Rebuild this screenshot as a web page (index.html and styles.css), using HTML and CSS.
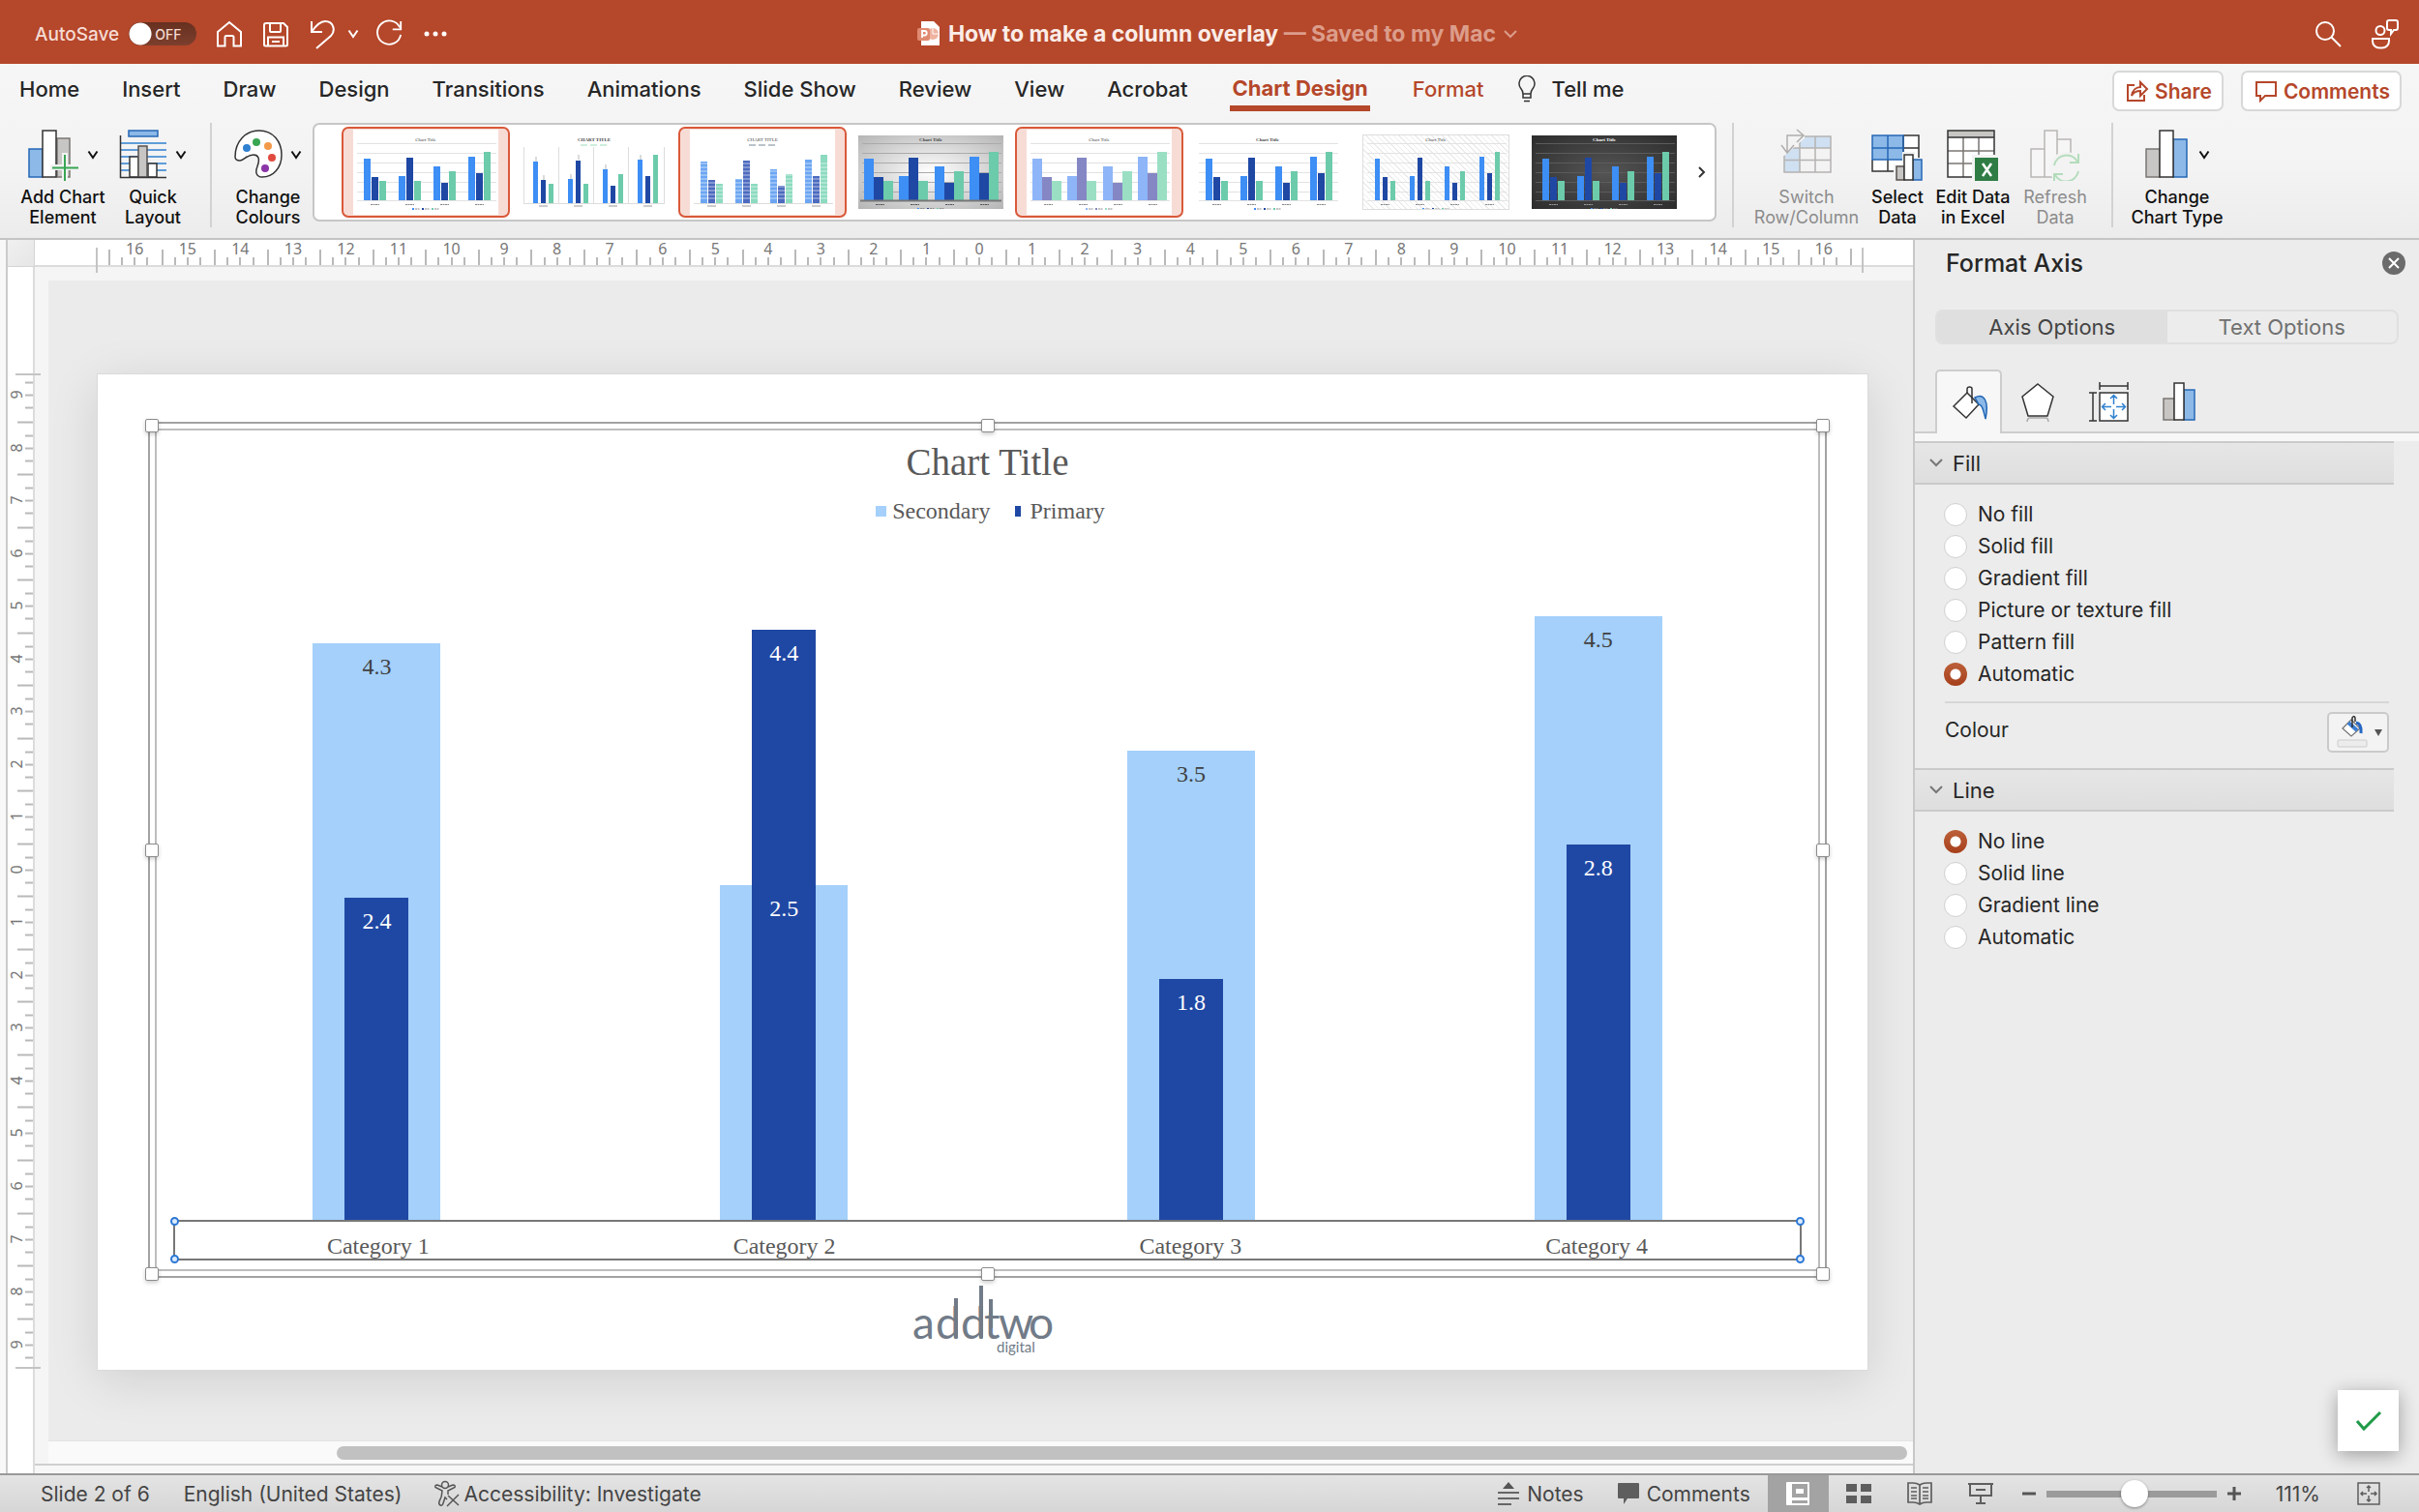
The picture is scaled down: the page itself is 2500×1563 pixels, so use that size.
FILE: index.html
```html
<!DOCTYPE html>
<html lang="en">
<head>
<meta charset="utf-8">
<title>How to make a column overlay</title>
<link rel="stylesheet" href="styles.css">
</head>
<body>
<svg class="defs" aria-hidden="true">
  <symbol id="bars" viewBox="0 0 150 88">
    <path fill="var(--a)" d="M11 73v-43h7v43zM47 73v-25h7v25zM83 73v-35h7v35zM119 73v-45h7v45z"/>
    <path fill="var(--b)" d="M19 73v-24h7v24zM55 73v-44h7v44zM91 73v-18h7v18zM127 73v-28h7v28z"/>
    <path fill="var(--c)" d="M27 73v-20h7v20zM63 73v-20h7v20zM99 73v-30h7v30zM135 73v-50h7v50z"/>
  </symbol>
  <symbol id="bars-full" viewBox="0 0 150 88">
    <path fill="var(--a)" d="M6 73v-43h10v43zM42 73v-25h10v25zM79 73v-35h10v35zM115 73v-45h10v45z"/>
    <path fill="var(--b)" d="M16 73v-24h10v24zM52 73v-44h10v44zM89 73v-18h10v18zM125 73v-28h10v28z"/>
    <path fill="var(--c)" d="M26 73v-20h10v20zM62 73v-20h10v20zM99 73v-30h10v30zM135 73v-50h10v50z"/>
  </symbol>
  <symbol id="bars-thin" viewBox="0 0 150 88">
    <path fill="var(--a)" d="M12 73v-43h5v43zM48 73v-25h5v25zM84 73v-35h5v35zM120 73v-45h5v45z"/>
    <path fill="var(--b)" d="M20 73v-24h5v24zM56 73v-44h5v44zM92 73v-18h5v18zM128 73v-28h5v28z"/>
    <path fill="var(--c)" d="M28 73v-20h5v20zM64 73v-20h5v20zM100 73v-30h5v30zM136 73v-50h5v50z"/>
  </symbol>
  <symbol id="grid" viewBox="0 0 150 88">
    <path fill="none" stroke="var(--g)" d="M4 14.500h144M4 24.500h144M4 34.500h144M4 44.500h144M4 54.500h144M4 64.500h144M4 73.500h144"/>
  </symbol>
  <symbol id="caps" viewBox="0 0 150 88">
    <path fill="none" stroke="var(--t)" stroke-dasharray="2 .5" d="M18 77.500h9M54 77.500h9M90 77.500h9M126 77.500h9"/>
    <path stroke="var(--a)" stroke-width="2" d="M61 82h2"/><path stroke="var(--b)" stroke-width="2" d="M71 82h2"/><path stroke="var(--c)" stroke-width="2" d="M81 82h2"/>
    <path stroke="var(--t)" stroke-dasharray="2 .5" d="M64 82h5M74 82h5M84 82h5"/>
  </symbol>
  <symbol id="chev" viewBox="0 0 12 12"><path d="M1.500 2.500L6 9l4.500-6.500" fill="none" stroke="currentColor" stroke-width="2"/></symbol>
</svg>

<header class="titlebar">
  <div class="quick">
    <label class="autosave">AutoSave <input type="checkbox" class="switch"><span class="off">OFF</span></label>
    <button class="tb" aria-label="Home"><svg width="28" height="30" viewBox="0 0 28 30"><path d="M2 13L14 3l12 10v14.500h-7.500v-9q0-1.500-1.500-1.500h-6q-1.500 0-1.500 1.500v9H2z"/></svg></button>
    <button class="tb" aria-label="Save"><svg width="28" height="30" viewBox="0 0 28 30"><path d="M4 4h18l4 4v18q0 1.500-1.500 1.500h-21Q2 27.500 2 26V6q0-2 2-2zM8 4v8q0 1 1 1h9q1 0 1-1V4M6 27V18.500h16V27M10 23h8"/></svg></button>
    <button class="tb undo" aria-label="Undo"><svg width="28" height="32" viewBox="0 0 28 32"><path d="M3 3v11h11M3 14C9 5 13 3 17 3c9 0 11 10 6 15L8 31"/></svg><svg width="12" height="12"><use href="#chev"/></svg></button>
    <button class="tb" aria-label="Redo"><svg width="30" height="30" viewBox="0 0 32 32"><path d="M28 9A13 13 0 1 0 29 17M29 2v9h-9"/></svg></button>
    <button class="tb" aria-label="More"><svg width="26" height="8" viewBox="0 0 26 8"><g class="solid"><circle cx="4" cy="4" r="2.500"/><circle cx="13" cy="4" r="2.500"/><circle cx="22" cy="4" r="2.500"/></g></svg></button>
  </div>
  <div class="doc">
    <svg width="24" height="28" viewBox="0 0 24 28"><path d="M4 1h13l6 6v19H4z" fill="#fff"/><circle cx="16" cy="14" r="6" fill="#efb3a0"/><path d="M16 8v6h6" stroke="#fff" fill="none"/><rect y="8" width="13" height="13" rx="2" fill="#e08a72"/><path d="M5 18v-7h2.500a2 2 0 0 1 0 4.500H5" stroke="#fff" stroke-width="1.800" fill="none"/></svg>
    <h1>How to make a column overlay <span>— Saved to my Mac</span></h1>
    <svg class="pale" width="14" height="14"><path d="M1 4l6 6 6-6" fill="none" stroke="currentColor" stroke-width="2"/></svg>
  </div>
  <div class="right">
    <button class="tb" aria-label="Search"><svg width="28" height="30" viewBox="0 0 28 30"><circle cx="11" cy="12" r="9"/><path d="M17.500 18.500L27 28"/></svg></button>
    <button class="tb" aria-label="Account"><svg width="30" height="32" viewBox="0 0 30 32"><circle cx="10" cy="12.500" r="4.500"/><path d="M2 21h17v2.500a7 7 0 0 1-7 7H9a7 7 0 0 1-7-7zM17 4q0-2 2-2h7q2 0 2 2v6q0 2-2 2h-2l-3 4v-4h-2q-2 0-2-2z"/></svg></button>
  </div>
</header>

<section class="ribbon">
  <nav class="tabs">
    <a href="#">Home</a><a href="#">Insert</a><a href="#">Draw</a><a href="#">Design</a><a href="#">Transitions</a><a href="#">Animations</a><a href="#">Slide Show</a><a href="#">Review</a><a href="#">View</a><a href="#">Acrobat</a><a href="#" class="current">Chart Design</a><a href="#" class="accent">Format</a>
    <a href="#" class="tell"><svg width="20" height="28" viewBox="0 0 20 28"><path d="M6 19q0-3-2.500-6a8 8 0 1 1 13 0Q14 16 14 19zM6 19v4h8v-4M7 26.500h6" fill="none" stroke="#333" stroke-width="1.500"/></svg>Tell me</a>
    <div class="actions">
      <button class="act"><svg width="24" height="24" viewBox="0 0 24 24"><path d="M9 6H2v16h17v-6M6 17c1-6 5-9 9-9V3l7 7-7 7v-5c-4 0-7 1-9 5z"/></svg>Share</button>
      <button class="act"><svg width="24" height="24" viewBox="0 0 24 24"><path d="M2 3h20v14H11l-5 5v-5H2z"/></svg>Comments</button>
    </div>
  </nav>

  <div class="tools">
    <button class="tool w100"><span class="ico"><svg width="54" height="54" viewBox="0 0 54 54"><path d="M2 21h14v29H2z" fill="#8db9e8" stroke="#2467b5" stroke-width="1.500"/><path d="M31 10h13v40H31z" fill="#c8c6c4" stroke="#797673" stroke-width="1.500"/><path d="M16 2h14v48H16z" fill="#fff" stroke="#333" stroke-width="1.500"/><path d="M39 25v29M24 40h29" stroke="#f3f3f3" stroke-width="6"/><path d="M39 27v27M26 40.500h27" stroke="#38a654" stroke-width="2"/></svg><svg width="12" height="12"><use href="#chev"/></svg></span>Add Chart<br>Element</button>
    <button class="tool w86"><span class="ico"><svg width="50" height="54" viewBox="0 0 50 54"><path d="M10 2h30v6H10z" fill="#8db9e8" stroke="#2467b5" stroke-width="1.500"/><path d="M2 15h47M2 22h47M2 29h47M2 36h47M2 43h47" stroke="#2f80d0" stroke-width="1.500"/><path d="M11 29h9v21h-9zM30 36h9v14h-9z" fill="#fff" stroke="#333" stroke-width="1.500"/><path d="M20 18h9v32h-9z" fill="#c8c6c4" stroke="#55524f" stroke-width="1.500"/><path d="M1.500 7v43.500H49" fill="none" stroke="#333" stroke-width="1.500"/></svg><svg width="12" height="12"><use href="#chev"/></svg></span>Quick<br>Layout</button>
    <i class="sep"></i>
    <button class="tool w84"><span class="ico"><svg width="50" height="54" viewBox="0 0 50 54"><path d="M1 29C1 13 12 2 26 2s23 11 23 25-9 23-20 23c-7 0-7-6-5-11 3-8 1-12-4-12-7 0-9 5-14 6-4 0-5-2-5-4z" fill="#fff" stroke="#333" stroke-width="1.500"/><circle cx="13" cy="20" r="4" fill="#2f80d0"/><circle cx="23" cy="14" r="4" fill="#38a654"/><circle cx="35" cy="18" r="4" fill="#f2994a"/><circle cx="39" cy="30" r="4" fill="#e04a3f"/><circle cx="32" cy="41" r="4" fill="#8a35a8"/></svg><svg width="12" height="12"><use href="#chev"/></svg></span>Change<br>Colours</button>

    <div class="gallery">
      <button class="style sel" aria-label="Style 1"><svg class="thumb white" viewBox="0 0 150 88"><use href="#grid"/><use href="#bars"/><use href="#caps"/><text x="75" y="12">Chart Title</text></svg></button>
      <button class="style" aria-label="Style 2"><svg class="thumb white" viewBox="0 0 150 88"><path d="M2.500 18v58M38.500 18v58M74.500 18v58M110.500 18v58M147.500 18v58M2 76.500h146" stroke="#ddd"/><use href="#bars-thin" y="3"/><path d="M15 28v5M51 46v5M87 36v5M123 26v5M59 26v5M23 47v5" stroke="#888" stroke-width=".6"/><text x="75" y="12" class="b">CHART TITLE</text><path d="M61 16h28" stroke="#9db" stroke-dasharray="7 3"/><path d="M18 79h9M54 79h9M90 79h9M126 79h9" stroke="#999"/></svg></button>
      <button class="style sel" aria-label="Style 3"><svg class="thumb white soft" viewBox="0 0 150 88"><use href="#bars" y="3"/><path d="M4 76.500h144" stroke="#ddd"/><path d="M8 35h136M8 39h136M8 43h136M8 47h136M8 51h136M8 55h136M8 59h136M8 63h136M8 67h136M8 71h136" stroke="#fff" stroke-width=".6"/><text x="75" y="12">CHART TITLE</text><path d="M61 16h28" stroke="#789" stroke-dasharray="7 3"/><path d="M18 79h9M54 79h9M90 79h9M126 79h9" stroke="#999"/></svg></button>
      <button class="style" aria-label="Style 4"><svg class="thumb silver" viewBox="0 6 150 76"><use href="#grid" width="150" height="88"/><use href="#bars-full" width="150" height="88"/><path d="M2 73.500h146" stroke="#777" stroke-width="2"/><use href="#caps" width="150" height="88"/><text x="75" y="12" class="b">Chart Title</text></svg></button>
      <button class="style sel" aria-label="Style 5"><svg class="thumb white fade" viewBox="0 0 150 88"><use href="#grid"/><use href="#bars-full"/><use href="#caps"/><text x="75" y="12">Chart Title</text></svg></button>
      <button class="style" aria-label="Style 6"><svg class="thumb white" viewBox="0 0 150 88"><use href="#grid"/><use href="#bars"/><use href="#caps"/><text x="75" y="12" class="b">Chart Title</text></svg></button>
      <button class="style" aria-label="Style 7"><svg class="thumb hatch" viewBox="0 6 150 76"><use href="#grid" width="150" height="88"/><use href="#bars-thin" width="150" height="88"/><use href="#caps" width="150" height="88"/><text x="75" y="12">Chart Title</text></svg></button>
      <button class="style" aria-label="Style 8"><svg class="thumb dark" viewBox="0 6 150 76"><use href="#grid" width="150" height="88"/><use href="#bars" width="150" height="88"/><use href="#caps" width="150" height="88"/><text x="75" y="12" class="b">Chart Title</text></svg></button>
      <button class="more" aria-label="More styles"><svg width="10" height="14"><path d="M2 2l5 5-5 5" fill="none" stroke="#333" stroke-width="2"/></svg></button>
    </div>

    <i class="sep"></i>
    <button class="tool w118" disabled><span class="ico"><svg width="54" height="54" viewBox="0 0 54 54"><path d="M20 8h32v12H20v25H4V20h16z" fill="#cfe0f2"/><path d="M4 20h48v25H4zM20 8h32v37H20zM36 8v37M4 32.500h48" fill="none" stroke="#b5b3b1" stroke-width="1.500"/><path d="M1 0h24v10L4 28H0z" fill="#f3f3f3"/><path d="M7 24V7h16M17 1l7 6-7 7M1 17l6 8 7-8" fill="none" stroke="#b0aeac" stroke-width="1.500"/></svg></span>Switch<br>Row/Column</button>
    <button class="tool w70"><span class="ico"><svg width="54" height="54" viewBox="0 0 54 54"><path d="M1 7h48v37H1z" fill="#fff"/><path d="M1 7h32v25H1z" fill="#8db9e8"/><path d="M33 7h16v37H1V32M33 7v37M17 32v12M33 20h16" fill="none" stroke="#333" stroke-width="1.500"/><path d="M1 7h32v25H1zM17 7v25M1 20h32" fill="none" stroke="#2467b5" stroke-width="1.500"/><path d="M23 37h9V24h13v6h9v24H23z" fill="#f3f3f3"/><path d="M26 39h8v14h-8z" fill="#c8c6c4" stroke="#55524f" stroke-width="1.500"/><path d="M43 32h9v21h-9z" fill="#8db9e8" stroke="#2467b5" stroke-width="1.500"/><path d="M34 27h9v26h-9z" fill="#fff" stroke="#333" stroke-width="1.500"/></svg></span>Select<br>Data</button>
    <button class="tool w86"><span class="ico"><svg width="54" height="54" viewBox="0 0 54 54"><path d="M1 2h48v48H1z" fill="#fff"/><path d="M1 2h48v7H1z" fill="#c8c6c4"/><path d="M17 9v41M33 9v41M1 23h48M1 36h48" stroke="#797673" stroke-width="1.500"/><path d="M1 2h48v48H1zM1 9h48" fill="none" stroke="#333" stroke-width="1.500"/><path d="M26 27h28v27H26z" fill="#f3f3f3"/><path d="M29 30h24v24H29z" fill="#2f7d44"/><path d="M37 36l9 13M46 36l-9 13" stroke="#fff" stroke-width="2.500"/></svg></span>Edit Data<br>in Excel</button>
    <button class="tool w84" disabled><span class="ico"><svg width="54" height="54" viewBox="0 0 54 54"><path d="M2 21h14v29H2zM29 11h14v39H29zM16 2h13v48H16z" fill="#f6f6f6" stroke="#b8b6b4" stroke-width="1.500"/><circle cx="38" cy="41" r="17" fill="#f3f3f3"/><path d="M26 38a13 13 0 0 1 24-4M51 26v9h-9M51 44a13 13 0 0 1-24 4M26 55v-8h9" fill="none" stroke="#b4dcbc" stroke-width="2"/></svg></span>Refresh<br>Data</button>
    <i class="sep"></i>
    <button class="tool w100"><span class="ico"><svg width="48" height="54" viewBox="0 0 48 54"><path d="M2 21h14v29H2z" fill="#c8c6c4" stroke="#797673" stroke-width="1.500"/><path d="M30 11h14v39H30z" fill="#8db9e8" stroke="#2467b5" stroke-width="1.500"/><path d="M16 2h14v48H16z" fill="#fff" stroke="#333" stroke-width="1.500"/></svg><svg width="12" height="12"><use href="#chev"/></svg></span>Change<br>Chart Type</button>
  </div>
</section>

<main class="body">
  <section class="editor">
    <div class="strip"></div>
    <div class="corner"></div>
    <div class="hruler"><i>16</i><i>15</i><i>14</i><i>13</i><i>12</i><i>11</i><i>10</i><i>9</i><i>8</i><i>7</i><i>6</i><i>5</i><i>4</i><i>3</i><i>2</i><i>1</i><i>0</i><i>1</i><i>2</i><i>3</i><i>4</i><i>5</i><i>6</i><i>7</i><i>8</i><i>9</i><i>10</i><i>11</i><i>12</i><i>13</i><i>14</i><i>15</i><i>16</i></div>
    <div class="vruler"><i>9</i><i>8</i><i>7</i><i>6</i><i>5</i><i>4</i><i>3</i><i>2</i><i>1</i><i>0</i><i>1</i><i>2</i><i>3</i><i>4</i><i>5</i><i>6</i><i>7</i><i>8</i><i>9</i></div>
    <div class="work">
      <div class="stage">
        <article class="slide">
          <div class="frame">
            <div class="chart">
              <h2>Chart Title</h2>
              <div class="legend"><span class="key light-key">Secondary</span><span class="key dark-key">Primary</span></div>
              <div class="plot">
                <div class="cat"><b class="bar wide" style="--v:4.3"></b><b class="bar slim" style="--v:2.4"></b><span class="val" style="--v:4.3">4.3</span><span class="val inv" style="--v:2.4">2.4</span></div>
                <div class="cat"><b class="bar wide" style="--v:2.5"></b><b class="bar slim" style="--v:4.4"></b><span class="val inv" style="--v:2.5">2.5</span><span class="val inv" style="--v:4.4">4.4</span></div>
                <div class="cat"><b class="bar wide" style="--v:3.5"></b><b class="bar slim" style="--v:1.8"></b><span class="val" style="--v:3.5">3.5</span><span class="val inv" style="--v:1.8">1.8</span></div>
                <div class="cat"><b class="bar wide" style="--v:4.5"></b><b class="bar slim" style="--v:2.8"></b><span class="val" style="--v:4.5">4.5</span><span class="val inv" style="--v:2.8">2.8</span></div>
              </div>
              <div class="axis"><span>Category 1</span><span>Category 2</span><span>Category 3</span><span>Category 4</span>
                <i class="dot t l"></i><i class="dot t r"></i><i class="dot b l"></i><i class="dot b r"></i></div>
            </div>
            <i class="grip t l"></i><i class="grip t c"></i><i class="grip t r"></i><i class="grip m l"></i><i class="grip m r"></i><i class="grip b l"></i><i class="grip b c"></i><i class="grip b r"></i>
          </div>
          <svg class="logo" width="152" height="74" viewBox="0 0 152 74"><text x="3 27 53 77 92 123" y="56" font-size="46">addtwo</text><path d="M46 14h4v41h-4zM72 1h4v54h-4zM82 15h4v30h-4z"/><text x="90" y="70" font-size="15">digital</text></svg>
        </article>
      </div>
      <div class="scroll"><i></i></div>
    </div>
  </section>

  <aside class="pane">
    <div class="phead"><h2>Format Axis</h2><button class="close" aria-label="Close"><svg width="24" height="24"><circle cx="12" cy="12" r="12" fill="#6b6b6b"/><path d="M7 7l10 10M17 7L7 17" stroke="#fff" stroke-width="2"/></svg></button></div>
    <div class="seg"><button class="on">Axis Options</button><button>Text Options</button></div>
    <div class="ptabs">
      <button class="on" aria-label="Fill and line"><svg width="40" height="40" viewBox="0 0 40 40"><path d="M4 24L18 10l12 12-13 14z" fill="#fff" stroke="#333" stroke-width="1.500"/><path d="M18 11V6q0-2 2.500-2T23 6v15" fill="none" stroke="#333" stroke-width="1.500"/><path d="M26 15c9-5 15 3 11 22-2-8-3-13-5-14l-2-1z" fill="#8db9e8" stroke="#2467b5" stroke-width="1.500"/></svg></button>
      <button aria-label="Effects"><svg width="40" height="42" viewBox="0 0 40 42"><path d="M20 3l16 13-6 20H10L4 16z" fill="#fff" stroke="#333" stroke-width="1.500"/><path d="M11 38q-2 1-2 4M29 38q2 1 2 4M11 38h18" stroke="#aaa" fill="none" stroke-width="1.500"/></svg></button>
      <button aria-label="Size"><svg width="42" height="42" viewBox="0 0 42 42"><path d="M12 12h29v29H12z" fill="#fff" stroke="#333" stroke-width="1.500"/><path d="M12 1v8M41 1v8M12 5h29M1 12h8M1 41h8M5 12v29" stroke="#333" stroke-width="1.500"/><path d="M26.500 24v-9M26.500 29v9M24 26.500h-9M29 26.500h9M23 18l3.500-3.500L30 18M23 35l3.500 3.500L30 35M18 23l-3.500 3.500L18 30M35 23l3.500 3.500L35 30" fill="none" stroke="#2f80d0" stroke-width="1.500"/></svg></button>
      <button aria-label="Axis options"><svg width="34" height="40" viewBox="0 0 34 40"><path d="M1 17h11v22H1z" fill="#c8c6c4" stroke="#797673" stroke-width="1.500"/><path d="M22 8h11v31H22z" fill="#8db9e8" stroke="#2467b5" stroke-width="1.500"/><path d="M12 1h10v38H12z" fill="#fff" stroke="#333" stroke-width="1.500"/></svg></button>
    </div>
    <h3><svg width="14" height="10"><path d="M1 1l6 6 6-6" fill="none" stroke="#777" stroke-width="2"/></svg>Fill</h3>
    <div class="opts">
      <label><input type="radio" name="fill">No fill</label>
      <label><input type="radio" name="fill">Solid fill</label>
      <label><input type="radio" name="fill">Gradient fill</label>
      <label><input type="radio" name="fill">Picture or texture fill</label>
      <label><input type="radio" name="fill">Pattern fill</label>
      <label><input type="radio" name="fill" checked>Automatic</label>
    </div>
    <div class="colour"><span id="clabel">Colour</span><button aria-labelledby="clabel"><svg width="60" height="38" viewBox="0 0 60 38"><path d="M14 15l9-9 9 9-9 8z" fill="#fff" stroke="#777" stroke-width="1.300"/><path d="M20 9l9 8" stroke="#3b7fd4" stroke-width="4"/><path d="M24 14V4q2-3 3 0v4" fill="none" stroke="#333" stroke-width="1.500"/><path d="M28 9q6 1 5 11" fill="none" stroke="#2467c5" stroke-width="3"/><rect x="9" y="27" width="30" height="7" rx="1" fill="#ececec" stroke="#ccc"/><path d="M47 16h8l-4 7z" fill="#555"/></svg></button></div>
    <h3><svg width="14" height="10"><path d="M1 1l6 6 6-6" fill="none" stroke="#777" stroke-width="2"/></svg>Line</h3>
    <div class="opts">
      <label><input type="radio" name="line" checked>No line</label>
      <label><input type="radio" name="line">Solid line</label>
      <label><input type="radio" name="line">Gradient line</label>
      <label><input type="radio" name="line">Automatic</label>
    </div>
    <button class="ok" aria-label="Done"><svg width="28" height="22"><path d="M2 11l7 8L26 2" fill="none" stroke="#1f9a48" stroke-width="3"/></svg></button>
  </aside>
</main>

<footer class="status">
  <span class="s1">Slide 2 of 6</span><span class="s2">English (United States)</span>
  <button class="sb"><svg width="28" height="28" viewBox="0 0 28 28"><g fill="none" stroke="#555" stroke-width="1.500"><circle cx="12" cy="5" r="3.500"/><path d="M9 7L4 5Q1 5 2 7.500l7 3.500q0 6-3 11-1 3 1 4t3-2l2-6 2 2M15 7l5-2q3 0 2 2.500L15 11v4M15 16l11 10M26 15L14 27"/></g></svg>Accessibility: Investigate</button>
  <button class="sb push"><svg width="24" height="26" viewBox="0 0 24 26"><path d="M6 8l6-7 6 7z" fill="#555"/><path d="M1 12h22M1 18h22M1 24h14" stroke="#666" stroke-width="2"/></svg>Notes</button>
  <button class="sb com"><svg width="24" height="24" viewBox="0 0 24 24"><path d="M2 1h20q1 0 1 1v14q0 1-1 1H11l-4 6v-6H2q-1 0-1-1V2q0-1 1-1z" fill="#5e5e5e"/></svg>Comments</button>
  <button class="view on" aria-label="Normal view"><svg width="26" height="26" viewBox="0 0 26 26"><rect x="1" y="1" width="24" height="24" rx="1" fill="#fff"/><path d="M7 3h16v14H7zM7 20h16v3H7z" fill="#a3a3a3"/><path d="M11 8h8v5h-8z" fill="#fff"/></svg></button>
  <button class="view" aria-label="Slide sorter"><svg width="26" height="24" viewBox="0 0 26 24"><path d="M0 2h11v8H0zM15 2h11v8H15zM0 14h11v8H0zM15 14h11v8H15z" fill="#5e5e5e"/></svg></button>
  <button class="view" aria-label="Reading view"><svg width="28" height="26" viewBox="0 0 28 26"><path d="M14 4q-3-2-7-2H2v20h5q4 0 7 2 3-2 7-2h5V2h-5q-4 0-7 2zM14 4v20M5 7h6M5 11h6M5 15h6M5 18h6M17 7h6M17 11h6M17 15h6M17 18h6" fill="none" stroke="#5e5e5e" stroke-width="1.700"/></svg></button>
  <button class="view" aria-label="Slide show"><svg width="28" height="26" viewBox="0 0 28 26"><path d="M1 3h26M3 3v12h22V3M9 9h10M14 15v8M9 23h10" fill="none" stroke="#5e5e5e" stroke-width="2"/></svg></button>
  <button class="zb" aria-label="Zoom out"><svg width="16" height="16"><path d="M1 8h14" stroke="#555" stroke-width="3"/></svg></button>
  <input type="range" class="zoom" min="0" max="100" value="52" aria-label="Zoom">
  <button class="zb" aria-label="Zoom in"><svg width="16" height="16"><path d="M1 8h14M8 1v14" stroke="#555" stroke-width="3"/></svg></button>
  <span class="pct">111%</span>
  <button class="fit" aria-label="Fit slide"><svg width="24" height="24" viewBox="0 0 24 24"><path d="M1 1h22v22H1zM12 10V4M12 14v6M10 12H4M14 12h6M10 6l2-2 2 2M10 18l2 2 2-2M6 10l-2 2 2 2M18 10l2 2-2 2" fill="none" stroke="#5e5e5e" stroke-width="1.500"/></svg></button>
</footer>
</body>
</html>
```
FILE: styles.css
```css
* { box-sizing: border-box; }
body {
  margin: 0;
  min-height: 100vh;
  display: flex;
  flex-direction: column;
  font-family: Inter, "Liberation Sans", sans-serif;
  font-size: 21px;
  color: #262626;
  background: #ececec;
}
button { border: 0; padding: 0; background: none; font: inherit; color: inherit; }
a { color: inherit; text-decoration: none; }
h1, h2, h3 { margin: 0; font-weight: 500; }
svg { display: block; flex: none; }
.defs { position: absolute; width: 0; height: 0; }

/* Title bar */
.titlebar {
  display: grid;
  grid-template-columns: 1fr auto 1fr;
  align-items: center;
  height: 66px;
  padding: 4px 20px 0 36px;
  background: #b5472a;
  color: #fff;
}
.quick { display: flex; align-items: center; gap: 20px; }
.right { display: flex; align-items: center; justify-content: flex-end; gap: 30px; }
.tb svg { fill: none; stroke: #fff; stroke-width: 2; }
.tb .solid { fill: #fff; stroke: none; }
.undo { display: flex; align-items: center; gap: 12px; }
.undo + .tb { margin-left: -4px; }
.autosave { display: grid; grid-template-columns: auto 70px; align-items: center; column-gap: 10px; font-size: 19px; font-weight: 500; color: #f6dcd4; }
.switch {
  grid-area: 1 / 2;
  appearance: none;
  margin: 0;
  width: 70px;
  height: 24px;
  border-radius: 12px;
  background: radial-gradient(circle at 12px 12px, #fff 11px, #0000 12px), linear-gradient(#66301f, #7d3f2e);
}
.off { grid-area: 1 / 2; padding-left: 27px; font-size: 14px; }
.doc { display: flex; align-items: center; gap: 8px; }
.doc h1 { font-size: 23px; font-weight: 700; color: #fbece7; white-space: nowrap; }
.doc h1 span, .pale { color: #dc9d8b; }

/* Ribbon */
.ribbon { background: linear-gradient(#f6f6f6, #f3f3f3 60%, #ececec); border-bottom: 2px solid #c4c4c4; }
.tabs { display: flex; align-items: center; gap: 44px; height: 51px; padding: 0 18px 0 20px; font-size: 22px; font-weight: 500; }
.tabs a { white-space: nowrap; }
.tabs .accent, .current { color: #b5472a; }
.tabs .current { padding: 0 2px; font-weight: 700; align-self: stretch; line-height: 50px; box-shadow: inset 0 -2px #f4f4f4, inset 0 -8px #b5472a; }
.tell { display: flex; align-items: center; gap: 16px; margin-left: -10px; }
.actions { display: flex; gap: 18px; margin: 5px 0 0 auto; }
.act {
  display: flex;
  align-items: center;
  gap: 6px;
  height: 42px;
  padding: 0 10px 0 12px;
  border: 2px solid #d8d8d8;
  border-radius: 7px;
  background: #fff;
  color: #b5472a;
  font-size: 21px;
  font-weight: 600;
}
.act svg { fill: none; stroke: #b5472a; stroke-width: 2; }
.tools { display: flex; align-items: flex-start; height: 129px; padding: 10px 0 0 15px; }
.tool { flex: none; font-size: 18px; font-weight: 500; line-height: 21px; color: #111; white-space: nowrap; }
.tool:disabled { color: #8c8c8c; font-weight: 400; }
.ico { display: flex; align-items: center; justify-content: center; gap: 8px; height: 66px; }
.w70 { width: 70px; }
.w84 { width: 84px; }
.w86 { width: 86px; }
.w100 { width: 100px; }
.w118 { width: 118px; }
.sep { flex: none; width: 2px; height: 108px; margin: 0 16px; background: #d2d2d2; }
.gallery {
  flex: 0 1 1451px;
  display: flex;
  align-items: center;
  height: 102px;
  margin-left: 4px;
  padding-left: 28px;
  border: 2px solid #c6c6c6;
  border-radius: 7px;
  background: #fff;
  overflow: hidden;
}
.style { flex: none; width: 174px; height: 94px; border: 2px solid #0000; border-radius: 7px; display: flex; align-items: center; justify-content: center; }
.style.sel { border-color: #d9593a; background: #f7dcd5; }
.more { flex: 1; display: flex; justify-content: center; }
.thumb { width: 150px; --a: #3d8ef5; --b: #1f48a4; --c: #6ccbab; --g: #e2e2e2; --t: #888; }
.thumb text { font: 5px "Liberation Serif", serif; text-anchor: middle; fill: #444; }
.thumb .b { font-weight: 700; }
.white { background: #fff; }
.soft { --a: #6ca6f2; --b: #4d6bbf; --c: #8cdabf; }
.fade { --a: #8db5f8; --b: #8587c4; --c: #9adfc4; }
.silver { --g: #aaa; --t: #555; background: radial-gradient(#fff, #b4b4b4); }
.hatch { box-shadow: 0 0 0 1px #ddd; background: repeating-linear-gradient(45deg, #fff 0 3px, #ececec 3px 4px); }
.dark { --g: #5c5c5c; --t: #999; background: radial-gradient(#555, #2c2c2c); }
.dark text { fill: #fff; }

/* Editor */
.body { flex: 1; display: flex; min-height: 0; }
.editor { flex: 1; display: grid; grid-template: 28px 1fr / 8px 28px 1fr; min-width: 0; background: #f5f5f5; }
.strip { grid-row: 1 / 3; background: #f8f8f8; border-right: 2px solid #cbcbcb; }
.corner { background: linear-gradient(135deg, #f0f0f0, #e6e6e6); border-right: 1px solid #d4d4d4; border-bottom: 1px solid #d4d4d4; }
.hruler, .vruler { position: relative; display: flex; background: #fff; font: 16px/18px "Noto Sans", sans-serif; color: #777; }
.hruler { padding: 0 63px 0 76px; border-bottom: 2px solid #dcdcdc; }
.hruler i, .vruler i { flex: 1; min-width: 0; font-style: normal; text-align: center; --k: linear-gradient(#b9b9b9, #b9b9b9); background-image: var(--k), var(--k), var(--k), var(--k); background-repeat: no-repeat; }
.hruler i { background-size: 2px 16px, 2px 8px, 2px 8px, 2px 8px; background-position: 0 100%, 25% 100%, 50% 100%, 75% 100%; }
.hruler i:last-child { border-right: 2px solid; border-image: linear-gradient(#0000 9px, #b9b9b9 9px) 1; }
.hruler::before, .hruler::after { content: ""; position: absolute; top: 8px; width: 2px; height: 26px; background: #c4c4c4; }
.hruler::before { left: 63px; }
.hruler::after { right: 51px; }
.vruler { flex-direction: column; padding: 105px 0 106px; border-right: 2px solid #dcdcdc; }
.vruler i { writing-mode: vertical-rl; transform: rotate(180deg); line-height: 18px; background-size: 16px 2px, 8px 2px, 8px 2px, 8px 2px; background-position: 0 100%, 0 75%, 0 50%, 0 25%; padding-left: 8px; }
.vruler i:first-child { background-size: 0 0, 8px 2px, 8px 2px, 8px 2px; }
.vruler::before, .vruler::after { content: ""; position: absolute; left: 8px; width: 26px; height: 2px; background: #c4c4c4; }
.vruler::before { top: 110px; }
.vruler::after { bottom: 108px; }
.work { display: flex; flex-direction: column; padding: 14px 0 10px 14px; min-width: 0; box-shadow: inset 0 -8px #f7f7f7, inset 0 -10px #cfcfcf; }
.stage { flex: 1; display: flex; padding: 97px 47px 73px 51px; background: #ebebeb; overflow: hidden; }
.slide { flex: 1; display: flex; flex-direction: column; align-items: center; padding: 49px 42px 14px 52px; background: #fff; box-shadow: 0 0 0 1px #dadada, 0 10px 48px #0000001f; }
.scroll { height: 24px; padding: 5px 6px 0 298px; background: #fafafa; border-top: 1px solid #e4e4e4; }
.scroll i { display: block; height: 14px; border-radius: 7px; background: #c1c1c1; }

/* Chart */
.frame { position: relative; flex: 1; align-self: stretch; display: flex; padding: 5px; border: 2px solid #a2a2a2; }
.chart { flex: 1; display: flex; flex-direction: column; padding: 11px 17px 9px 17px; border: 2px solid #bdbdbd; font-family: Georgia, "Liberation Serif", serif; font-size: 24px; line-height: 24px; color: #595959; }
.chart h2 { font-size: 39px; font-weight: 400; line-height: 44px; text-align: center; }
.legend { display: flex; justify-content: center; gap: 26px; margin: 16px 0 28px; padding-left: 6px; }
.key { display: flex; align-items: center; gap: 6px; }
.key::before { content: ""; width: 11px; height: 11px; background: #a4d0fb; }
.dark-key { gap: 9px; }
.dark-key::before { width: 6px; background: #1f48a4; }
.plot { flex: 1; display: grid; grid-template-columns: repeat(4, 1fr); min-height: 300px; }
.cat { display: grid; grid-template: minmax(0, 1fr) / 1fr; justify-items: center; align-items: end; }
.bar, .val { grid-area: 1 / 1; height: calc(var(--v) / 5 * 100%); }
.wide { width: 31.4%; background: #a4d0fb; }
.slim { width: 15.7%; background: #1f48a4; }
.val { padding-top: 12px; color: #404040; }
.val.inv { color: #fff; }
.axis { position: relative; display: grid; grid-template-columns: repeat(4, 1fr); height: 42px; padding-top: 13px; border: 2px solid #777; text-align: center; }
.dot { position: absolute; width: 9px; height: 9px; border: 2px solid #2d78d6; border-radius: 50%; background: #dcebfb; }
.dot.t, .grip.t { top: -5px; }
.dot.b, .grip.b { bottom: -5px; }
.dot.l, .grip.l { left: -5px; }
.dot.r, .grip.r { right: -5px; }
.grip { position: absolute; width: 14px; height: 14px; border: 1px solid #8c8c8c; border-radius: 2px; background: #fff; box-shadow: 0 2px 4px #0003; }
.grip.c { left: calc(50% - 7px); }
.grip.m { top: calc(50% - 7px); }
.logo { margin: 7px 10px 0 0; font-family: Lato, sans-serif; fill: #717b88; }

/* Format pane */
.pane { position: relative; flex: none; width: 523px; border-left: 2px solid #c8c8c8; background: #ececec; }
.phead { display: flex; align-items: center; justify-content: space-between; height: 48px; padding: 0 14px 0 32px; }
.phead h2 { font-size: 25px; }
.seg { display: grid; grid-template-columns: 1fr 1fr; height: 36px; margin: 24px 21px 0; border: 2px solid #e0e0e0; border-radius: 8px; font-size: 22px; color: #707070; overflow: hidden; }
.seg .on { background: #dfdfdf; color: #444; }
.ptabs { display: flex; height: 74px; margin-top: 26px; padding: 0 0 0 21px; box-shadow: inset 0 -8px #f7f7f7, inset 0 -10px #cdcdcd; }
.ptabs button { display: flex; align-items: center; justify-content: center; width: 73px; height: 66px; }
.ptabs .on { width: 69px; border: 2px solid #cdcdcd; border-bottom: 0; border-radius: 5px 5px 0 0; background: #f7f7f7; }
.pane h3 { display: flex; align-items: center; gap: 10px; height: 45px; margin-right: 26px; padding-left: 15px; border: solid #cacaca; border-width: 2px 0; background: linear-gradient(#e6e6e6, #dedede); font-size: 22px; font-weight: 400; }
.opts { display: flex; flex-direction: column; padding: 14px 0 0 30px; }
.opts label { display: flex; align-items: center; gap: 11px; height: 33px; }
.opts input { appearance: none; margin: 0; width: 24px; height: 24px; border: 1px solid #cfcfcf; border-radius: 50%; background: #fff; }
.opts input:checked { border: 0; background: radial-gradient(circle, #fff 5px, #0000 6px), linear-gradient(#bc6039, #a63f1b); }
.colour { display: flex; justify-content: space-between; margin: 12px 31px 16px; padding-top: 9px; border-top: 2px solid #d6d6d6; }
.colour span { line-height: 38px; }
.colour button { width: 64px; height: 42px; border: 2px solid #cacaca; border-radius: 5px; background: #f3f3f3; }
.ok { position: absolute; right: 21px; bottom: 23px; width: 63px; height: 63px; display: flex; align-items: center; justify-content: center; background: #fff; box-shadow: 0 4px 18px #0005; }

/* Status bar */
.status { display: flex; align-items: center; height: 40px; padding-left: 42px; border-top: 2px solid #999; background: linear-gradient(#e4e4e4, #d6d6d6); color: #444; font-size: 21px; white-space: nowrap; }
.s2 { margin: 0 32px 0 35px; }
.sb { display: flex; align-items: center; gap: 4px; }
.push { margin-left: auto; gap: 7px; }
.com { gap: 7px; margin: 0 18px 0 34px; }
.view { display: flex; align-items: center; justify-content: center; width: 63px; height: 38px; }
.view.on { background: #a3a3a3; }
.zb { padding: 0 10px; }
.zoom { appearance: none; width: 176px; height: 28px; margin: 0; background: linear-gradient(#9b9b9b, #9b9b9b) center / 100% 7px no-repeat; }
.zoom::-webkit-slider-thumb { appearance: none; width: 28px; height: 28px; border-radius: 50%; background: #fff; box-shadow: 0 1px 3px #0006; }
.pct { margin: 0 38px 0 25px; }
.fit { margin-right: 40px; }
```
